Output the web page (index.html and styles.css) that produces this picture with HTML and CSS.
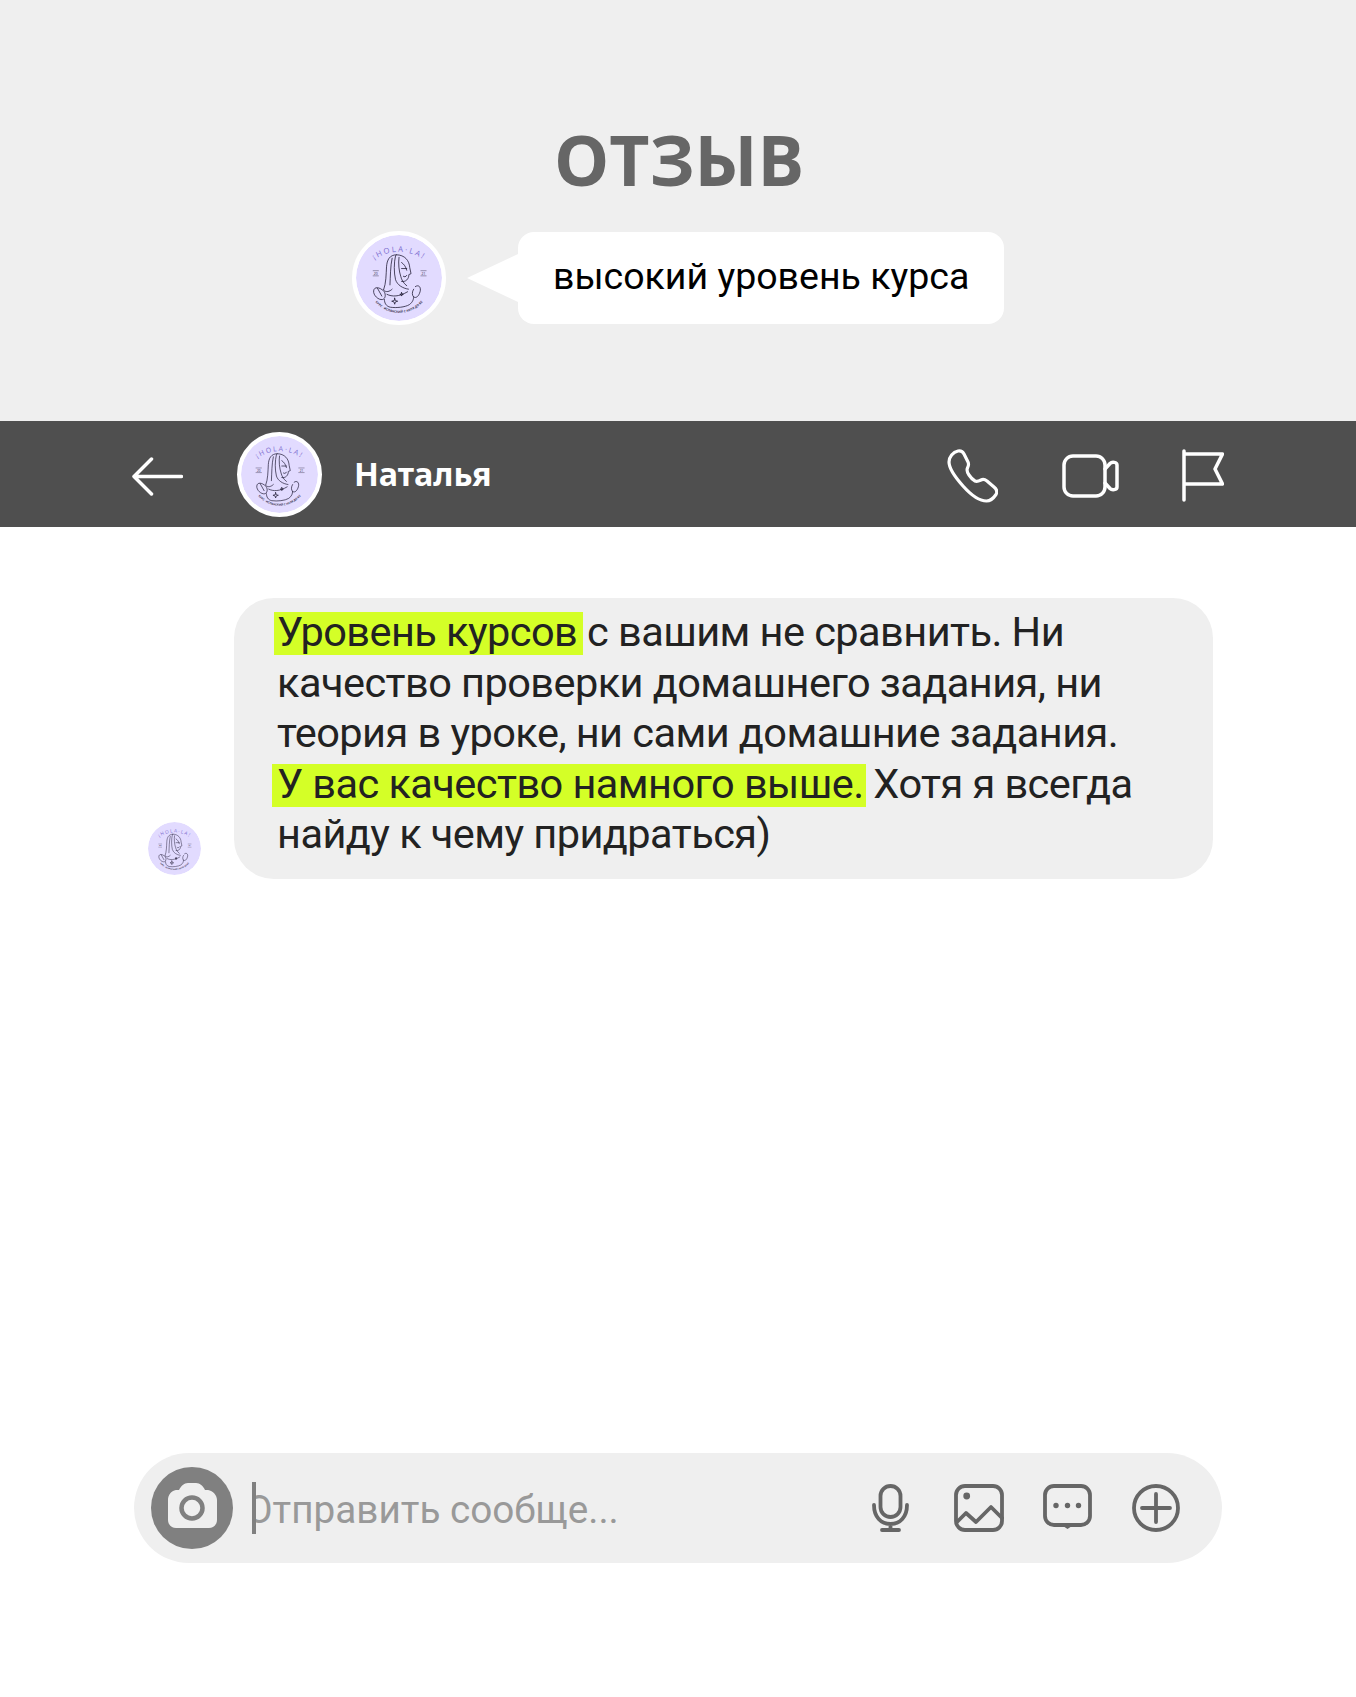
FILE: index.html
```html
<!DOCTYPE html>
<html lang="ru">
<head>
<meta charset="utf-8">
<title>Отзыв</title>
<link rel="stylesheet" href="styles.css">
</head>
<body>
<svg class="defs" width="0" height="0" aria-hidden="true">
  <defs>
    <path id="logo-arc" d="M16 33A50 50 0 0 1 84 33"/>
    <path id="logo-arc-low" d="M18.500 72A36 36 0 0 0 81.500 72"/>
    <symbol id="logo" viewBox="0 0 100 100">
      <circle cx="50" cy="50" r="50" fill="#e2dbff"/>
      <text class="logo-title"><textPath href="#logo-arc" startOffset="50%" text-anchor="middle">¡HOLA·LA!</textPath></text>
      <text class="logo-sub"><textPath href="#logo-arc-low" startOffset="50%" text-anchor="middle">КУРС · ИСПАНСКИЙ С НУЛЯ ДО В2</textPath></text>
      <text class="logo-year" x="23" y="46.200">20</text>
      <text class="logo-year" x="78.500" y="46.200">21</text>
      <path class="logo-thin" d="M19.500 41.500h7M19.500 47.500h7M75 41.500h7M75 47.500h7"/>
      <g class="logo-line">
        <path d="M47 23C39 23 36 29 35.500 37C35 46 35 56 32 64C35 67 39 66 42 63"/>
        <path d="M47 23C57 23 62 30 62.500 38L64 45L61.500 46C61.500 51 58 55 53 54"/>
        <path d="M46 24C44 32 44 44 46 52C48 58 54 62 61 63M42 27C40 36 40 48 39.500 58M50 26C49 33 50 42 52 48C53 52 55 56 59 59"/>
        <path d="M53 32C56 34 58 37 59 41M53 39H59M55 48C56 49 58 49 59 47"/>
        <path d="M32 65C27 60 21 60 20.500 65C20 70 26 76 31 75C34 74 35 70 33 66M25 62L30 71M69 60C73 57 76 61 74.500 66C73 71 70 74 67 72C65 70 65 66 67 63"/>
        <path d="M33 75C33 79 35 83 40 84C47 85 57 84 62 81C66 78 67 75 67 72M36 69C42 72 50 72 60 66"/>
        <path d="M45 73.500L45.800 76.200L48.500 77L45.800 77.800L45 80.500L44.200 77.800L41.500 77L44.200 76.200ZM53 67L53.500 68.500L55 69L53.500 69.500L53 71L52.500 69.500L51 69L52.500 68.500Z"/>
      </g>
    </symbol>
  </defs>
</svg>

<div class="page">
  <header class="hero">
    <h1 class="hero-title">ОТЗЫВ</h1>
    <div class="quote">
      <svg class="avatar avatar-quote"><use href="#logo"/></svg>
      <div class="quote-tail"></div>
      <p class="quote-bubble">высокий уровень курса</p>
    </div>
  </header>

  <nav class="bar">
    <svg class="icon-back" viewBox="0 0 51 39"><path d="M49.500 19.500H2M19.500 2L2 19.500L19.500 37"/></svg>
    <svg class="avatar avatar-bar"><use href="#logo"/></svg>
    <span class="bar-name">Наталья</span>
    <div class="bar-actions">
      <svg class="icon-phone" viewBox="0 0 51 54"><path d="M11 2C14 1.500 16 3 17 5L21 13C22 15 21.500 17 20.500 19C19.500 21 20 23 22 26C24 29 26 31 28 32C30 33 32 32 34 31C36 30 38 30.500 40 32L47 38C50 40.500 50.500 43 49 45.500C46 50 43 52 39.500 52C33 52 24 46 16 37C8 28 2 20 2 13C2 8 6 3 11 2Z"/></svg>
      <svg class="icon-video" viewBox="0 0 57 44"><rect x="2" y="2" width="41" height="40" rx="9"/><path d="M43 15L48 9.500C50 7.500 55 8 55 11V33C55 36 50 36.500 48 34.500L43 29"/></svg>
      <svg class="icon-flag" viewBox="0 0 42 53"><path d="M2 2V51M2 5H40.500L33 20L40.500 35H2"/></svg>
    </div>
  </nav>

  <main class="thread">
    <svg class="avatar avatar-small"><use href="#logo"/></svg>
    <p class="message"><mark class="hl hl-wide">Уровень курсов</mark> с вашим не сравнить. Ни<br>качество проверки домашнего задания, ни<br>теория в уроке, ни сами домашние задания.<br><mark class="hl">У вас качество намного выше.</mark> Хотя я всегда<br>найду к чему придраться)</p>
  </main>

  <footer class="composer">
    <div class="camera">
      <svg viewBox="0 0 82 82"><path class="camera-body" d="M17 33C17 28 20 24 25 23H28C30 19 33 16 37 16H45C49 16 52 19 54 23H57C62 24 66 28 66 33V53C66 58 62 61 58 61H25C21 61 17 58 17 53Z"/><circle class="camera-lens" cx="41" cy="41" r="10.500"/></svg>
    </div>
    <span class="caret"></span>
    <span class="composer-text">Отправить сообще...</span>
    <div class="composer-actions">
      <svg class="icon-mic" viewBox="0 0 37 48"><rect x="8.500" y="2" width="20" height="31" rx="10"/><path d="M2 21C2 33 9 40 18.500 40C28 40 35 33 35 21M18.500 40V46M10 46H27"/></svg>
      <svg class="icon-image" viewBox="0 0 50 48"><rect x="2" y="2" width="46" height="44" rx="9"/><circle class="fill" cx="12.700" cy="12" r="3.400"/><path d="M3 38L12 29L22 38L37 23L48 34"/></svg>
      <svg class="icon-chat" viewBox="0 0 49 45"><rect x="2" y="2" width="45" height="39" rx="9"/><path class="fill" d="M20 42H29L24.500 45Z"/><circle class="fill" cx="13" cy="21.500" r="2.700"/><circle class="fill" cx="24.500" cy="21.500" r="2.700"/><circle class="fill" cx="35.500" cy="21.500" r="2.700"/></svg>
      <svg class="icon-plus" viewBox="0 0 48 48"><circle cx="24" cy="24" r="22"/><path d="M10 24H38M24 10V38"/></svg>
    </div>
  </footer>
</div>
</body>
</html>
```

FILE: styles.css
```css
* {
  box-sizing: border-box;
}

html,
body {
  margin: 0;
  padding: 0;
  background: #fff;
}

.defs {
  position: absolute;
}

.page {
  width: 1356px;
  height: 1697px;
  display: flex;
  flex-direction: column;
  font-family: Roboto, "Liberation Sans", sans-serif;
  overflow: hidden;
}

/* logo */
.avatar {
  display: block;
  flex: none;
  border-radius: 50%;
}

.avatar-quote {
  width: 94px;
  height: 94px;
  border: 4px solid #fff;
  background: #fff;
}

.avatar-bar {
  width: 85px;
  height: 85px;
  border: 4px solid #fff;
  background: #fff;
}

.avatar-small {
  width: 53px;
  height: 53px;
}

.logo-title {
  font-family: "Open Sans", sans-serif;
  font-size: 9px;
  letter-spacing: 2.200px;
  fill: #7d6fd0;
}

.logo-sub {
  font-family: "Open Sans", sans-serif;
  font-size: 3.600px;
  font-weight: 700;
  fill: #3a3550;
}

.logo-year {
  font-family: "Open Sans", sans-serif;
  font-size: 4px;
  text-anchor: middle;
  fill: #2b2640;
}

.logo-thin {
  fill: none;
  stroke: #2b2640;
  stroke-width: 0.500;
}

.logo-line path {
  fill: none;
  stroke: #1f1a33;
  stroke-width: 0.900;
  stroke-linejoin: round;
  stroke-linecap: round;
}

/* hero */
.hero {
  flex: none;
  height: 421px;
  padding-top: 117px;
  background: #efefef;
  display: flex;
  flex-direction: column;
  align-items: center;
}

.hero-title {
  margin: 0 0 0 2px;
  font-family: "Open Sans", sans-serif;
  font-size: 69.500px;
  font-weight: 700;
  line-height: 84px;
  color: #666;
}

.quote {
  margin-top: 30px;
  display: flex;
  align-items: center;
}

.quote-tail {
  width: 51px;
  height: 48px;
  margin-left: 21px;
  background: #fff;
  clip-path: polygon(100% 0, 100% 100%, 0 50%);
}

.quote-bubble {
  margin: 0;
  width: 486px;
  height: 92px;
  padding: 0 0 0 35px;
  background: #fff;
  border-radius: 16px;
  font-size: 37.500px;
  line-height: 88px;
  color: #000;
  white-space: nowrap;
}

/* top bar */
.bar {
  flex: none;
  height: 106px;
  padding: 0 132px 0 132px;
  background: #4f4f4f;
  display: flex;
  align-items: center;
  color: #fff;
}

.bar svg {
  fill: none;
  stroke: #fff;
  stroke-linecap: round;
  stroke-linejoin: round;
}

.icon-back {
  flex: none;
  width: 51px;
  height: 39px;
  margin-top: 4px;
  stroke-width: 3.500;
}

.bar .avatar-bar {
  margin-left: 54px;
  stroke: none;
}

.bar-name {
  margin: 0 0 3px 32px;
  font-family: "Noto Sans", sans-serif;
  font-size: 32.300px;
  font-weight: 700;
  white-space: nowrap;
}

.bar-actions {
  margin-left: auto;
  padding-top: 3px;
  display: flex;
  align-items: center;
  gap: 63px;
}

.icon-phone {
  width: 51px;
  height: 54px;
  margin-right: 1px;
  stroke-width: 3.200;
}

.icon-video {
  width: 57px;
  height: 44px;
  stroke-width: 3.500;
}

.icon-flag {
  width: 42px;
  height: 53px;
  stroke-width: 3.500;
}

/* thread */
.thread {
  flex: 1;
  padding: 71px 0 0 148px;
  display: flex;
  align-items: flex-start;
  gap: 33px;
}

.thread .avatar-small {
  margin-top: 224px;
}

.message {
  margin: 0;
  flex: none;
  width: 979px;
  height: 281px;
  padding: 9px 0 0 43px;
  background: #efefef;
  border-radius: 40px;
  font-size: 41.500px;
  line-height: 50.600px;
  letter-spacing: -0.550px;
  color: #222;
}

.hl {
  margin: 0 -2px 0 -5px;
  padding: 0 2px 0 5px;
  color: inherit;
  background: linear-gradient(#d4ff27, #d4ff27) 0 5px / 100% 43px no-repeat;
}

.hl-wide {
  margin: 0 -6px 0 -3px;
  padding: 0 6px 0 3px;
}

/* composer */
.composer {
  flex: none;
  height: 110px;
  margin: 0 134px 134px 134px;
  padding: 0 42px 0 17px;
  background: #efefef;
  border-radius: 55px;
  display: flex;
  align-items: center;
}

.camera {
  flex: none;
  width: 82px;
  height: 82px;
  border-radius: 50%;
  background: #808080;
}

.camera svg {
  display: block;
  width: 82px;
  height: 82px;
}

.camera-body {
  fill: #efefef;
}

.camera-lens {
  fill: none;
  stroke: #808080;
  stroke-width: 4.500;
}

.caret {
  flex: none;
  width: 4px;
  height: 52px;
  margin-left: 19px;
  background: #808080;
}

.composer-text {
  display: block;
  margin-top: 4px;
  overflow: hidden;
  text-indent: -10px;
  font-size: 38.700px;
  line-height: 52px;
  color: #999;
  white-space: nowrap;
}

.composer-actions {
  margin-left: auto;
  display: flex;
  align-items: flex-start;
}

.composer-actions svg {
  fill: none;
  stroke: #666;
  stroke-width: 3.800;
  stroke-linecap: round;
  stroke-linejoin: round;
}

.composer-actions .fill {
  fill: #666;
  stroke: none;
}

.icon-mic {
  flex: none;
  width: 37px;
  height: 48px;
}

.icon-image {
  flex: none;
  width: 50px;
  height: 48px;
  margin-left: 45px;
}

.icon-chat {
  flex: none;
  width: 49px;
  height: 45px;
  margin-left: 39px;
}

.icon-plus {
  flex: none;
  width: 48px;
  height: 48px;
  margin-left: 40px;
}
```
